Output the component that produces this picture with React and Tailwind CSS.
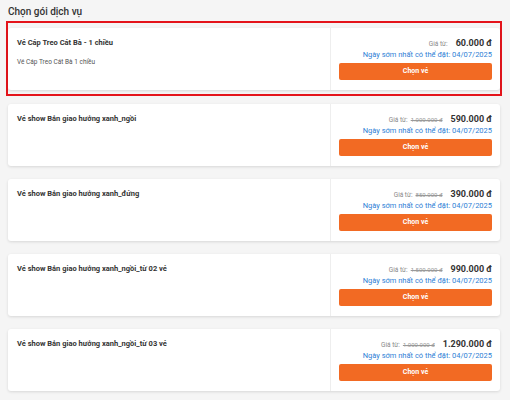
import React from 'react';

const packages = [
  { id: 1, title: 'Vé Cáp Treo Cát Bà - 1 chiều', desc: 'Vé Cáp Treo Cát Bà 1 chiều', oldPrice: null, price: '60.000 đ', selected: true },
  { id: 2, title: 'Vé show Bản giao hưởng xanh_ngồi', oldPrice: '1.000.000 đ', price: '590.000 đ' },
  { id: 3, title: 'Vé show Bản giao hưởng xanh_đứng', oldPrice: '850.000 đ', price: '390.000 đ' },
  { id: 4, title: 'Vé show Bản giao hưởng xanh_ngồi_từ 02 vé', oldPrice: '1.500.000 đ', price: '990.000 đ' },
  { id: 5, title: 'Vé show Bản giao hưởng xanh_ngồi_từ 03 vé', oldPrice: '1.000.000 đ', price: '1.290.000 đ' },
];

const PackageCard = ({ item }) => (
  <div className="flex h-[62px] bg-white rounded-[3px] shadow-[0_1px_3px_rgba(0,0,0,0.12)]">
    <div className="flex-1 min-w-0 pl-[9px] pt-[10px]">
      <h3 className="text-[7.5px] leading-[10px] font-bold text-[#333]">{item.title}</h3>
      {item.desc && (
        <p className="mt-[9px] text-[6.5px] leading-[10px] text-[#555]">{item.desc}</p>
      )}
    </div>
    <div className="w-[170px] border-l border-[#eeeeee] px-[8px] pt-[9px] flex flex-col">
      <div className="h-[12px] flex items-baseline justify-end">
        <span className="text-[6.5px] text-[#888]">Giá từ:</span>
        {item.oldPrice && (
          <span className="ml-[3px] text-[6px] text-[#999] line-through">{item.oldPrice}</span>
        )}
        <span className="ml-[8px] text-[9px] font-bold text-[#333]">{item.price}</span>
      </div>
      <div className="h-[12px] flex items-center justify-end text-[7.5px] text-[#2f7fd6]">
        Ngày sớm nhất có thể đặt: 04/07/2025
      </div>
      <button className="mt-[2px] h-[17px] w-full bg-[#f26a23] rounded-[2px] text-white text-[7px] font-bold">
        Chọn vé
      </button>
    </div>
  </div>
);

export default function App() {
  return (
    <div className="h-[400px] overflow-hidden w-[510px] bg-[#f5f5f5] pl-[8px] pr-[10px] pt-[6px] font-['Roboto',sans-serif]">
      <h2 className="text-[10px] leading-[12px] font-medium text-[#333]">Chọn gói dịch vụ</h2>
      <div className="mt-[3px] flex flex-col gap-[13px]">
        {packages.map((item) =>
          item.selected ? (
            <div key={item.id} className="-mx-[2px] -mb-[5px] border-2 border-[#e4141b] pt-[5px] pb-[4px]">
              <PackageCard item={item} />
            </div>
          ) : (
            <PackageCard key={item.id} item={item} />
          )
        )}
      </div>
    </div>
  );
}
